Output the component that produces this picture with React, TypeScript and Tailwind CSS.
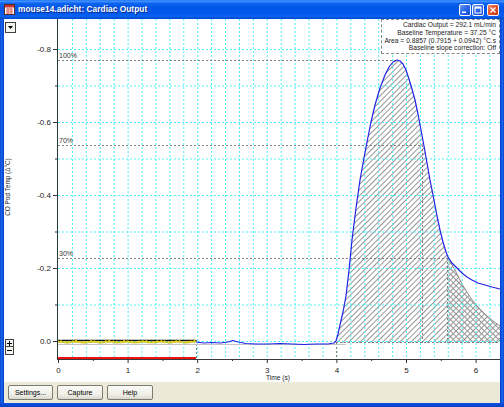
import React from "react";

const X = (t: number) => 58 + t * 69.6;
const Y = (v: number) => 341 + v * 365;

const blue =
  "196,342 204,343 212,342.5 220,343 228,342 233,340.5 238,342 246,343.5 256,344 268,344 280,343.5 292,344 304,344.5 316,344 328,344 334,343 336,341 338,334 340,325 343,312 346,296 349,270 352,240 356,208 360,180 364,158 367,142 371,122 375,105 380,88 385,75 389,67 393,62 397,60 400,61 403,64 406,70 409,79 412,89 415,100 418,114 421,130 424,146 427,163 430,180 434,200 437,216 440,230 443,242 446,252 448,257 452,263 457,268 462,273 467,277 472,280 478,283 485,285 492,287 500,289";

const peakPart = blue
  .split(" ")
  .filter((p) => {
    const x = parseFloat(p.split(",")[0]);
    return x >= 336 && x <= 448;
  })
  .join(" ");

const decay = "448,257 455,270 462,284 470,297 478,307 486,315 493,321 500,326";

function noise(seed: number, from: number, to: number, base: number, amp: number) {
  const pts: string[] = [];
  for (let x = from; x <= to; x += 1.5) {
    const y = base + Math.sin(x * 1.7 + seed) * amp + Math.sin(x * 0.37 + seed * 2) * amp * 0.7;
    pts.push(`${x.toFixed(1)},${y.toFixed(2)}`);
  }
  return pts.join(" ");
}

function Plot() {
  const hGrid = [-0.8, -0.7, -0.6, -0.5, -0.4, -0.3, -0.2, -0.1, 0];
  const vGrid = Array.from({ length: 31 }, (_, i) => X((i + 1) * 0.2));
  const yLabels = [
    [-0.8, "-0.8"],
    [-0.6, "-0.6"],
    [-0.4, "-0.4"],
    [-0.2, "-0.2"],
    [0, "0.0"],
  ] as const;
  const xLabels = [0, 1, 2, 3, 4, 5, 6];
  const font = "'Liberation Sans', Arial, sans-serif";

  return (
    <svg width="496" height="363" viewBox="4 19 496 363" className="block">
      <defs>
        <pattern id="h1" width="4" height="4" patternUnits="userSpaceOnUse" patternTransform="rotate(45)">
          <line x1="0.5" y1="0" x2="0.5" y2="4" stroke="#969696" strokeWidth="1" />
        </pattern>
        <pattern id="h2" width="4" height="4" patternUnits="userSpaceOnUse" patternTransform="rotate(-45)">
          <line x1="0.5" y1="0" x2="0.5" y2="4" stroke="#969696" strokeWidth="1" />
        </pattern>
      </defs>

      {/* hatched area */}
      <polygon points={`336,343 ${peakPart} 448,343`} fill="url(#h1)" />
      <polygon points={`${decay} 500,343 448,343`} fill="url(#h1)" />
      <polygon points={`${decay} 500,343 448,343`} fill="url(#h2)" />
      <polyline points={decay} fill="none" stroke="#8c8c8c" strokeWidth="1" />

      {/* grid */}
      {hGrid.map((v) => (
        <line key={v} x1="58" x2="500" y1={Y(v) + 0.5} y2={Y(v) + 0.5} stroke="#4ff0f6" strokeDasharray="2 2" />
      ))}
      {vGrid.map((x) => (
        <line key={x} x1={x + 0.5} x2={x + 0.5} y1="19" y2="359" stroke="#4ff0f6" strokeDasharray="2 2" />
      ))}

      {/* percentage guides */}
      <g stroke="#808080" strokeDasharray="2 2" strokeWidth="1">
        <line x1="58" x2="397" y1="60.5" y2="60.5" />
        <line x1="58" x2="423" y1="145.5" y2="145.5" />
        <line x1="58" x2="448" y1="258.5" y2="258.5" />
        <line x1="422.5" x2="422.5" y1="145" y2="343" />
        <line x1="447.5" x2="447.5" y1="258" y2="343" />
        <line x1="336" x2="500" y1="342.5" y2="342.5" />
        <line x1="196.5" x2="196.5" y1="340" y2="359" />
        <line x1="336.5" x2="336.5" y1="343" y2="359" />
      </g>
      <g fontFamily={font} fontSize="7" fill="#333">
        <text x="59" y="58">100%</text>
        <text x="59" y="143">70%</text>
        <text x="59" y="256">30%</text>
      </g>

      {/* traces */}
      <line x1="58" x2="346" y1="344.5" y2="344.5" stroke="#c4c4c4" strokeWidth="1" />
      <line x1="58" x2="196" y1="340.5" y2="340.5" stroke="#111" strokeWidth="1.6" />
      <polyline points={noise(1, 58, 196, 341.8, 0.8)} fill="none" stroke="#f0dc00" strokeWidth="1.2" />
      <polyline points={noise(4, 58, 196, 342.6, 0.5)} fill="none" stroke="#a89800" strokeWidth="0.6" />
      <polyline points={blue} fill="none" stroke="#2222e8" strokeWidth="1.2" strokeLinejoin="round" />
      <line x1="58" x2="196" y1="358" y2="358" stroke="#ee1111" strokeWidth="2" />

      {/* axes */}
      <line x1="57.5" x2="57.5" y1="19" y2="359.5" stroke="#1e3c3c" strokeWidth="1" />
      <line x1="57" x2="500" y1="359.5" y2="359.5" stroke="#3a3a3a" strokeWidth="1" />
      {hGrid.map((v, i) => (
        <line
          key={v}
          x1={i % 2 === 0 ? 53 : 55}
          x2="57"
          y1={Y(v) + 0.5}
          y2={Y(v) + 0.5}
          stroke="#333"
        />
      ))}
      {Array.from({ length: 13 }, (_, i) => i * 0.5).map((t) => (
        <line
          key={t}
          x1={X(t) + 0.5}
          x2={X(t) + 0.5}
          y1="359"
          y2={Number.isInteger(t) ? 363 : 361}
          stroke="#333"
        />
      ))}
      <g fontFamily={font} fontSize="8" fill="#222">
        {yLabels.map(([v, s]) => (
          <text key={s} x="51" y={Y(v) + 3} textAnchor="end">
            {s}
          </text>
        ))}
        {xLabels.map((t) => (
          <text key={t} x={X(t) + 0.5} y="373" textAnchor="middle">
            {t}
          </text>
        ))}
      </g>
      <text x="278" y="380" fontFamily={font} fontSize="6.6" fill="#222" textAnchor="middle">
        Time (s)
      </text>
      <text
        transform="translate(9.5,187) rotate(-90)"
        fontFamily={font}
        fontSize="6.4"
        fill="#222"
        textAnchor="middle"
      >
        CO Pod Temp (Δ°C)
      </text>
    </svg>
  );
}

function TitleButton({ kind }: { kind: "min" | "max" | "close" }) {
  const close = kind === "close";
  return (
    <div
      className={`w-[12px] h-[12px] rounded-[2px] border border-white flex items-center justify-center ${
        close
          ? "bg-[linear-gradient(135deg,#f08a6a,#e0502a_50%,#c23a14)]"
          : "bg-[linear-gradient(135deg,#6a9cf8,#2a66ea_50%,#1a4ed0)]"
      }`}
    >
      <svg width="8" height="8" viewBox="0 0 8 8">
        {kind === "min" && <rect x="1" y="5.5" width="4" height="1.5" fill="white" />}
        {kind === "max" && (
          <>
            <rect x="1" y="1" width="6" height="6" fill="none" stroke="white" strokeWidth="1" />
            <rect x="1" y="1" width="6" height="1.6" fill="white" />
          </>
        )}
        {close && <path d="M1.5 1.5 L6.5 6.5 M6.5 1.5 L1.5 6.5" stroke="white" strokeWidth="1.4" />}
      </svg>
    </div>
  );
}

function AppIcon() {
  return (
    <svg width="11" height="11" viewBox="0 0 11 11">
      <rect x="0.5" y="0.5" width="10" height="10" fill="#fff" stroke="#5a2a2a" />
      <rect x="1" y="1" width="9" height="2.5" fill="#c83228" />
      <path d="M2 5 H9 M2 7 H9 M2 9 H9" stroke="#d04a3a" strokeWidth="0.8" />
      <path d="M4 4 V10 M7 4 V10" stroke="#d04a3a" strokeWidth="0.8" />
    </svg>
  );
}

function XpButton({ label, w }: { label: string; w: string }) {
  return (
    <button
      className={`${w} h-[15px] rounded-[2px] border border-[#7b7b72] bg-[linear-gradient(#fbfbf8,#eeede5_70%,#d9d7cc)] text-[7px] text-black leading-none flex items-center justify-center`}
    >
      {label}
    </button>
  );
}

export default function App() {
  return (
    <div className="w-[504px] h-[407px] flex flex-col overflow-hidden bg-[#0b50dc] font-['Liberation_Sans',Arial,sans-serif]">
      {/* title bar */}
      <div className="h-[19px] flex items-center pl-[4px] pr-[5px] bg-[linear-gradient(to_bottom,#2a7cf6_0%,#3a8dff_8%,#0f64ef_18%,#0056e6_40%,#0058ec_70%,#0a63f5_85%,#0049c8_100%)]">
        <AppIcon />
        <span className="ml-[3px] text-white font-bold text-[8.3px] tracking-[0.05px] [text-shadow:1px_1px_0_#0b2a8c]">
          mouse14.adicht: Cardiac Output
        </span>
        <div className="ml-auto flex items-center">
          <TitleButton kind="min" />
          <div className="w-[1px]" />
          <TitleButton kind="max" />
          <div className="w-[3px]" />
          <TitleButton kind="close" />
        </div>
      </div>

      <div className="flex-1 flex">
        <div className="w-[4px] bg-[linear-gradient(to_right,#0a3fc8,#1a66ee,#0b52dd,#0a3fc8)]" />
        <div className="flex-1 flex flex-col">
          <div className="relative h-[363px] bg-white">
            <Plot />

            {/* range dropdown */}
            <div className="absolute left-[1px] top-[3px] w-[11px] h-[11px] border border-[#404040] bg-[#f4f4f0] flex items-center justify-center">
              <svg width="5" height="3" viewBox="0 0 5 3">
                <path d="M0 0 H5 L2.5 3 Z" fill="#000" />
              </svg>
            </div>

            {/* zoom buttons */}
            <div className="absolute left-[1px] top-[320px] flex flex-col">
              <div className="w-[9px] h-[8px] border border-[#404040] bg-[#f4f4f0] flex items-center justify-center">
                <svg width="5" height="5" viewBox="0 0 5 5">
                  <path d="M0 2.5 H5 M2.5 0 V5" stroke="#000" strokeWidth="1" />
                </svg>
              </div>
              <div className="w-[9px] h-[8px] border border-t-0 border-[#404040] bg-[#f4f4f0] flex items-center justify-center">
                <svg width="5" height="5" viewBox="0 0 5 5">
                  <path d="M0 2.5 H5" stroke="#000" strokeWidth="1" />
                </svg>
              </div>
            </div>

            {/* readout */}
            <div className="absolute right-0 top-0 w-[119px] h-[35px] border border-dashed border-[#8a8a8a] bg-white pr-[3px] pt-[1px] text-right text-[6.7px] leading-[7.8px] text-[#222] whitespace-nowrap">
              <div>Cardiac Output = 292.1 mL/min</div>
              <div>Baseline Temperature = 37.25 °C</div>
              <div>Area = 0.8857 (0.7915 + 0.0942) °C.s</div>
              <div>Baseline slope correction: Off</div>
            </div>
          </div>

          <div className="h-[21px] bg-[#ece9d8] flex items-center pl-[4px] gap-[4px]">
            <XpButton label="Settings..." w="w-[45px]" />
            <XpButton label="Capture" w="w-[46px]" />
            <XpButton label="Help" w="w-[46px]" />
          </div>
        </div>
        <div className="w-[4px] bg-[linear-gradient(to_right,#0a3fc8,#0b52dd,#1a66ee,#0a3fc8)]" />
      </div>
      <div className="h-[4px] bg-[linear-gradient(to_bottom,#0b52dd,#0a3fc8)]" />
    </div>
  );
}
